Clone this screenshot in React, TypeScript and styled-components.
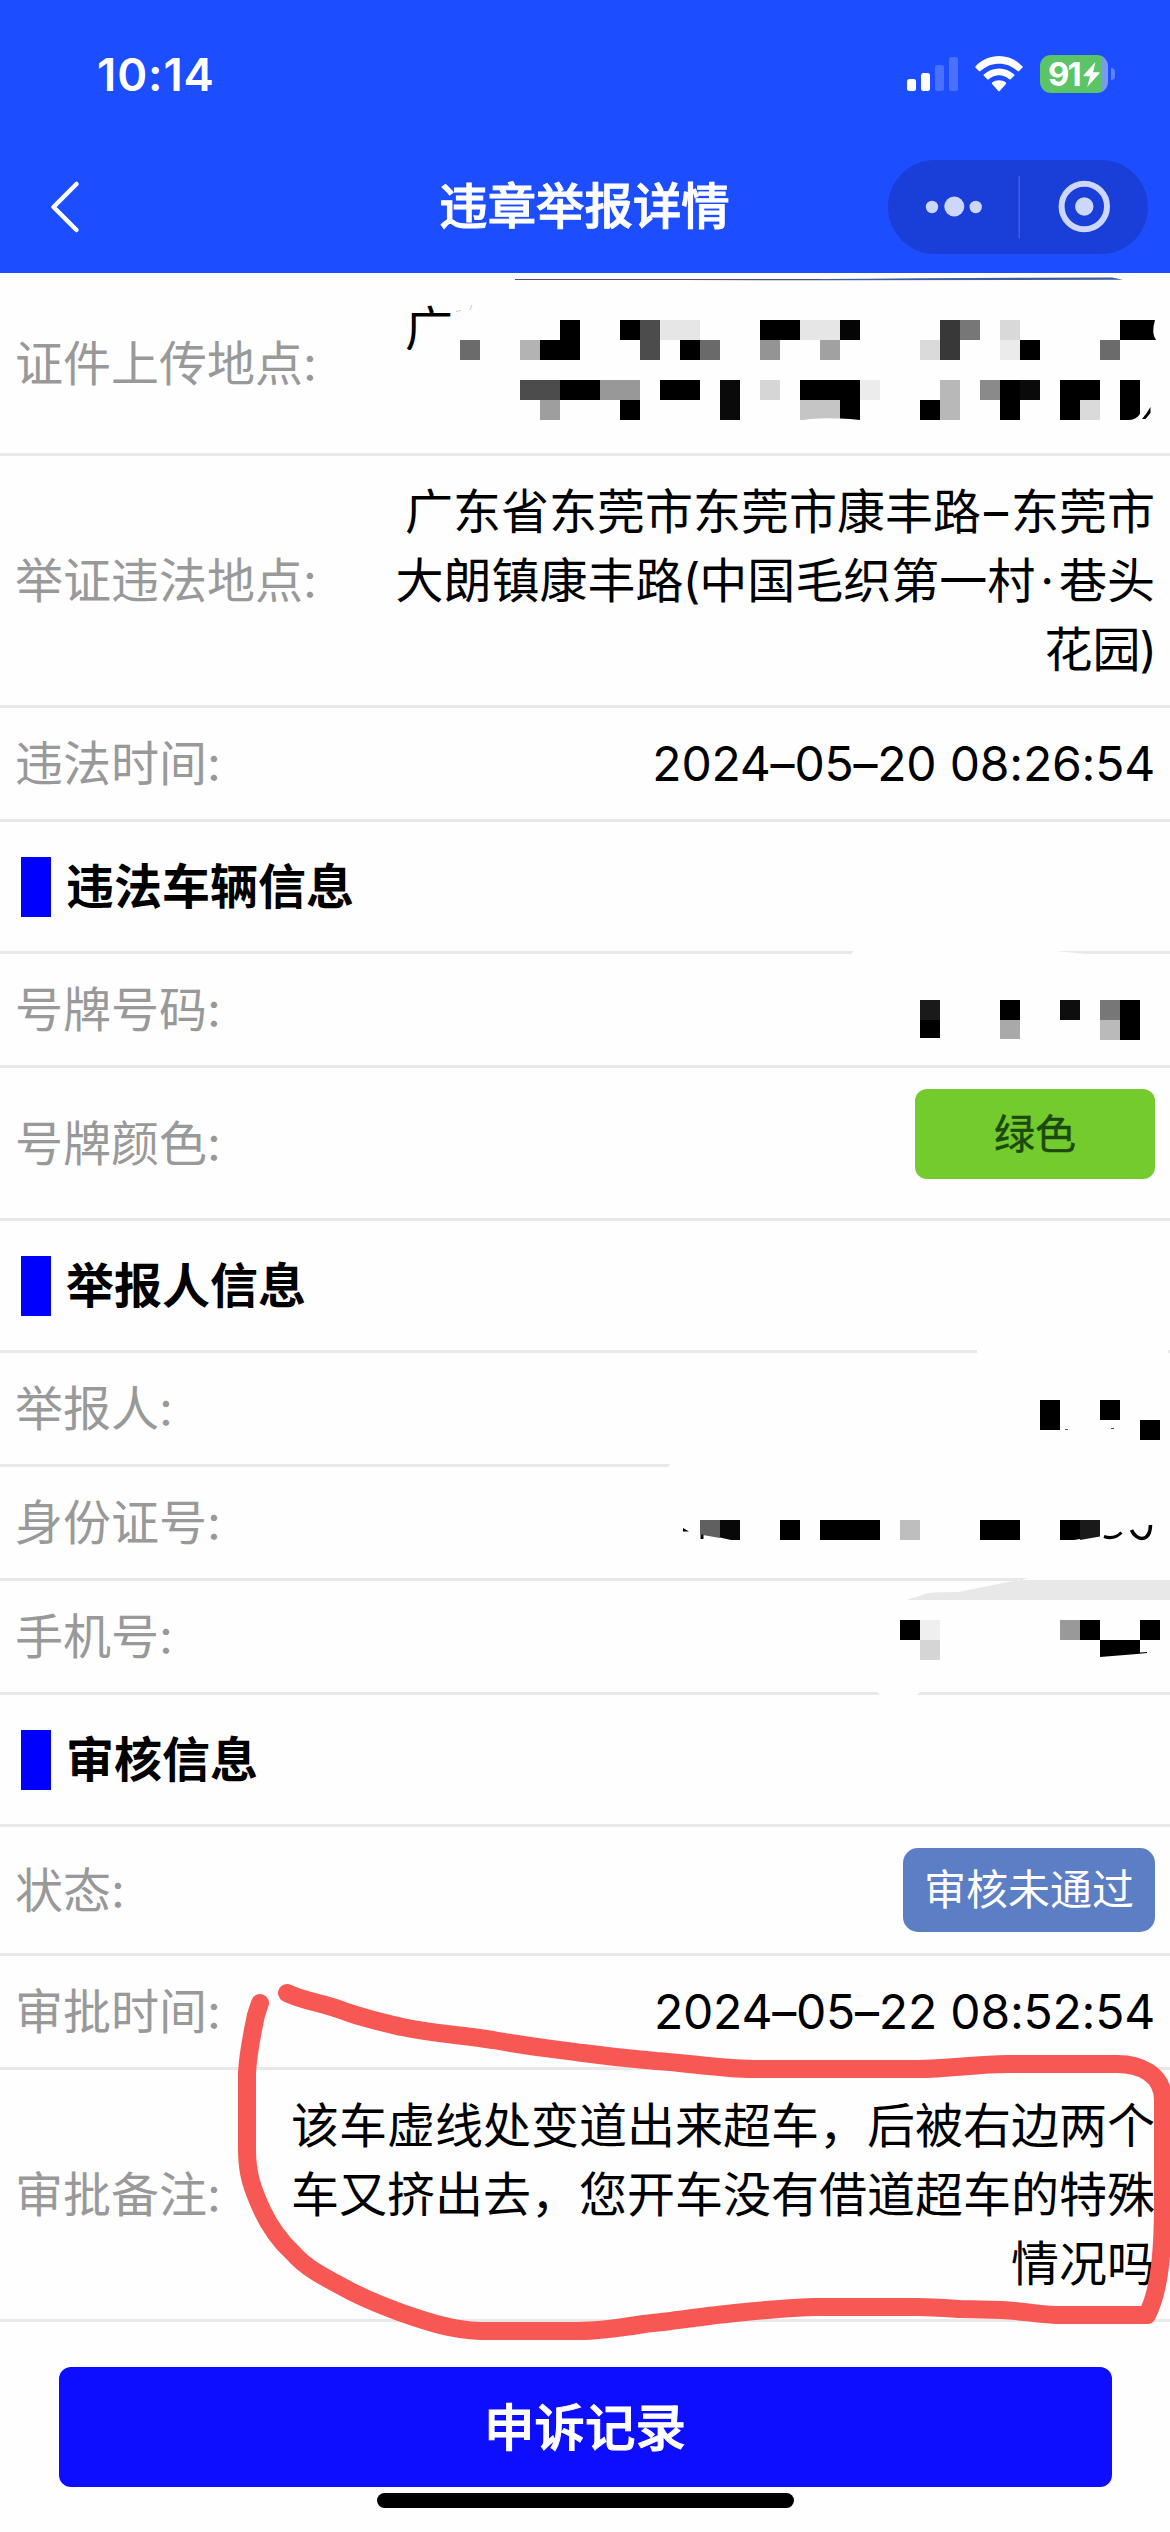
import React from "react";
import styled, { createGlobalStyle } from "styled-components";

const GlobalStyle = createGlobalStyle`
  * { box-sizing: border-box; }
  body { margin: 0; background: #fefefe; }
`;

const Page = styled.div`
  position: relative;
  width: 1170px;
  height: 2532px;
  overflow: hidden;
  display: flex;
  flex-direction: column;
  background: #fefefe;
  color: #000;
  font-family: Inter, "Noto Sans CJK SC", sans-serif;
  font-size: 48px;
  line-height: 69px;
`;

const Header = styled.header`
  flex: none;
  height: 273px;
  background: #1c4dff;
  color: #fff;
  display: flex;
  flex-direction: column;
`;

const StatusBar = styled.div`
  height: 140px;
  padding: 8px 55px 0 97px;
  display: flex;
  align-items: center;
  justify-content: space-between;
`;

const Clock = styled.span`
  font-size: 45.5px;
  font-weight: 600;
  letter-spacing: 0.9px;
`;

const StatusIcons = styled.div`
  display: flex;
  align-items: center;
  gap: 17px;
`;

const Battery = styled.div`
  display: flex;
  align-items: center;
  gap: 3px;
`;

const BatteryBody = styled.div`
  width: 68px;
  height: 38px;
  border-radius: 11px;
  padding-left: 8px;
  display: flex;
  align-items: center;
  gap: 1px;
  background: linear-gradient(90deg, #5ac466 0 62px, #7a9ce8 62px);
`;

const BatteryLevel = styled.span`
  width: 34px;
  font-size: 33px;
  font-weight: 700;
  line-height: 38px;
  letter-spacing: -2px;
  white-space: nowrap;
`;

const BatteryNub = styled.div`
  width: 4px;
  height: 12px;
  border-radius: 0 4px 4px 0;
  background: #5f82fb;
`;

const NavBar = styled.div`
  height: 133px;
  padding: 0 22px 0 49px;
  display: grid;
  grid-template-columns: 260px 1fr 260px;
  align-items: center;
`;

const Title = styled.h1`
  margin: 0;
  font-size: 48.4px;
  font-weight: 500;
  -webkit-text-stroke: 1px currentColor;
  text-align: center;
  padding-right: 28px;
  white-space: nowrap;
`;

const Capsule = styled.div`
  height: 94px;
  border-radius: 47px;
  background: #1a3fd9;
`;

const Row = styled.div`
  position: relative;
  flex: none;
  display: flex;
  align-items: center;
  justify-content: space-between;
  padding: 21px 15px;
  border-bottom: 3px solid #e8e8e8;
`;

const Label = styled.span`
  color: #999;
  white-space: nowrap;
`;

const Value = styled.div`
  text-align: right;
  white-space: nowrap;
`;

const Digits = styled(Value)`
  letter-spacing: -0.2px;
`;

const Mark = styled.span<{ $before?: number; $after?: number }>`
  margin-left: ${(p) => p.$before ?? 0}px;
  margin-right: ${(p) => p.$after ?? 0}px;
`;

const MaskedAddress = styled.div`
  width: 750px;
  height: 138px;
`;

const FirstGlyph = styled.span`
  display: inline-block;
  clip-path: polygon(0 0, 46px 0, 46px 24px, 20px 24px, 20px 56px, 0 56px);
`;

const SectionHead = styled.div`
  position: relative;
  flex: none;
  height: 132px;
  display: flex;
  align-items: center;
  gap: 15px;
  padding-left: 21px;
  border-bottom: 3px solid #e8e8e8;
`;

const Marker = styled.i`
  width: 30px;
  height: 60px;
  background: #0000ff;
`;

const SectionTitle = styled.h2`
  margin: 0;
  font-size: 48px;
  font-weight: 700;
`;

const PlateColor = styled.div`
  width: 240px;
  height: 90px;
  margin-bottom: 18px;
  border-radius: 12px;
  background: #73cb2e;
  color: #1d4a0c;
  font-size: 41px;
  line-height: 90px;
  text-align: center;
  -webkit-text-stroke: 0.5px currentColor;
`;

const Tag = styled.div`
  height: 84px;
  padding: 0 21px;
  border-radius: 15px;
  background: #5c7ec4;
  color: #fff;
  font-size: 42px;
  line-height: 84px;
`;

const Footer = styled.footer`
  display: flex;
  flex-direction: column;
  align-items: center;
  gap: 6px;
  padding-top: 45px;
`;

const RecordButton = styled.button`
  width: 1053px;
  height: 120px;
  border: 0;
  border-radius: 12px;
  background: #0d0dff;
  color: #fff;
  font: 500 50.5px/120px Inter, "Noto Sans CJK SC", sans-serif;
  -webkit-text-stroke: 1px currentColor;
`;

const HomeIndicator = styled.div`
  width: 417px;
  height: 15px;
  border-radius: 8px;
  background: #000;
`;

const Overlay = styled.svg`
  position: absolute;
  left: 0;
  top: 0;
  pointer-events: none;
`;

type Cell = [x: number, y: number, w: number, h: number, fill: string];

function Mosaic({ top, height, cells, children }: {
  top: number; height: number; cells: Cell[]; children?: React.ReactNode;
}) {
  return (
    <Overlay width={1170} height={height} viewBox={`0 ${top} 1170 ${height}`}>
      {children}
      {cells.map(([x, y, w, h, fill], i) => (
        <rect key={i} x={x} y={y} width={w} height={h} fill={fill} shapeRendering="crispEdges" />
      ))}
    </Overlay>
  );
}

const K = "#000";

const addressCells: Cell[] = [
  [560, 320, 20, 20, K], [620, 320, 20, 20, K], [640, 320, 20, 40, "#4c4c4c"], [660, 320, 40, 20, "#e6e6e6"],
  [760, 320, 40, 20, K], [800, 320, 40, 20, "#e6e6e6"], [840, 320, 20, 20, "#050505"],
  [940, 320, 20, 40, "#383838"], [960, 320, 20, 20, "#777"], [1000, 320, 20, 20, "#d9d9d9"],
  [460, 340, 20, 20, "#6b6b6b"], [520, 340, 20, 20, "#b3b3b3"], [540, 340, 40, 20, K],
  [680, 340, 20, 20, K], [700, 340, 20, 20, "#6a6a6a"], [760, 340, 20, 20, "#949494"],
  [820, 340, 20, 20, "#a1a1a1"], [920, 340, 20, 20, "#dadada"], [1000, 340, 20, 20, "#ebebeb"],
  [1020, 340, 20, 20, K], [1100, 340, 20, 20, "#6b6b6b"],
  [520, 380, 40, 20, "#4c4c4c"], [560, 380, 40, 20, K], [600, 380, 40, 20, "#989898"],
  [660, 380, 40, 20, K], [720, 380, 20, 40, "#0a0a0a"], [760, 380, 20, 20, "#d6d6d6"],
  [800, 380, 60, 20, K], [860, 380, 20, 20, "#ececec"], [940, 380, 20, 40, "#b8b8b8"],
  [980, 380, 20, 20, "#8a8a8a"], [1000, 380, 20, 40, K], [1020, 380, 20, 20, "#0a0a0a"],
  [1060, 380, 40, 20, K], [540, 400, 20, 20, "#9e9e9e"], [620, 400, 20, 20, K],
  [920, 400, 20, 20, K], [1060, 400, 20, 20, K], [1080, 400, 20, 20, "#dadada"],
];

const plateCells: Cell[] = [
  [920, 1000, 20, 20, "#1a1a1a"], [920, 1020, 20, 18, K], [1000, 1000, 20, 20, K],
  [1000, 1020, 20, 19, "#a9a9a9"], [1060, 1000, 20, 20, "#0e0e0e"],
  [1100, 1000, 20, 20, "#777"], [1100, 1020, 20, 20, "#bababa"], [1120, 1000, 20, 40, K],
];

const reporterCells: Cell[] = [
  [1040, 1400, 20, 30, K], [1100, 1400, 20, 20, K], [1140, 1420, 20, 20, K],
  [1065, 1429, 3, 1, "#555"], [1111, 1428, 3, 1, "#555"],
];

const idCells: Cell[] = [
  [780, 1520, 20, 20, K], [820, 1520, 60, 20, K], [900, 1520, 20, 20, "#bebebe"], [980, 1520, 40, 20, K],
];

const phoneCells: Cell[] = [
  [900, 1620, 20, 20, K], [920, 1620, 20, 20, "#efefef"], [920, 1640, 20, 20, "#d5d5d5"],
  [1060, 1620, 20, 20, "#999"], [1080, 1620, 20, 20, K], [1140, 1620, 20, 20, K],
];

function Section({ title, children }: { title: string; children?: React.ReactNode }) {
  return (
    <SectionHead>
      <Marker />
      <SectionTitle>{title}</SectionTitle>
      {children}
    </SectionHead>
  );
}

export default function App() {
  return (
    <Page lang="zh-CN">
      <GlobalStyle />
      <Header>
        <StatusBar>
          <Clock>10:14</Clock>
          <StatusIcons>
            <svg width="51" height="34" viewBox="0 0 51 34" fill="#fff">
              <rect x="0" y="22" width="9" height="12" rx="2.5" />
              <rect x="14" y="16" width="9" height="18" rx="2.5" />
              <rect x="28" y="8" width="9" height="26" rx="2.5" opacity=".2" />
              <rect x="42" y="0" width="9" height="34" rx="2.5" opacity=".2" />
            </svg>
            <svg width="48" height="36" viewBox="0 0 48 36" fill="#fff">
              <path d="M.6 10.2C13.500-3.400 34.500-3.400 47.400 10.200Q48 11 47.400 11.700L44 15.100Q43.300 15.700 42.600 15.100C32.200 5.200 15.800 5.200 5.400 15.100Q4.700 15.700 4 15.100L.6 11.700Q0 11 .6 10.200Z" />
              <path d="M8.800 18.400C17.300 10.400 30.700 10.400 39.200 18.400Q39.900 19.100 39.200 19.800L35.700 23.200Q35 23.800 34.300 23.200C28.300 18 19.700 18 13.700 23.200Q13 23.800 12.300 23.200L8.800 19.800Q8.100 19.100 8.800 18.400Z" />
              <path d="M17.100 26.600C21 23.500 27 23.500 30.900 26.600Q31.600 27.300 30.900 28L24.700 35.100Q24 35.800 23.300 35.100L17.100 28Q16.400 27.300 17.100 26.600Z" />
            </svg>
            <Battery>
              <BatteryBody>
                <BatteryLevel>91</BatteryLevel>
                <svg width="17" height="25" viewBox="0 0 17 25" fill="#fff">
                  <path d="M12.500 0 0.500 13.200Q0 14.300 1.200 14.300H7L4.200 25 16.500 11.300Q17 10.200 15.800 10.200H10Z" />
                </svg>
              </BatteryBody>
              <BatteryNub />
            </Battery>
          </StatusIcons>
        </StatusBar>
        <NavBar>
          <svg width="32" height="54" viewBox="0 0 32 54" fill="none" stroke="#fff" strokeWidth="4.500">
            <path d="M27.500 4 4.500 27 27.500 50" strokeLinecap="round" strokeLinejoin="round" />
          </svg>
          <Title>违章举报详情</Title>
          <Capsule>
            <svg width="260" height="94" viewBox="0 0 260 94" fill="#ccd7fb">
              <circle cx="44" cy="47" r="6.200" />
              <circle cx="66.300" cy="46.500" r="10" />
              <circle cx="87.700" cy="47" r="6.200" />
              <rect x="130.500" y="16" width="1.500" height="62" fill="#3c5fe6" />
              <circle cx="196.300" cy="46.500" r="22.700" fill="none" stroke="#ccd7fb" strokeWidth="6" />
              <circle cx="196.300" cy="46.500" r="9.200" />
            </svg>
          </Capsule>
        </NavBar>
      </Header>

      <Row>
        <Label>证件上传地点:</Label>
        <MaskedAddress>
          <FirstGlyph>广</FirstGlyph>
        </MaskedAddress>
        <Mosaic top={273} height={183} cells={addressCells}>
          <path d="M515 279.600L820 279Q960 277.500 1112 277.500L1123 279.800L830 280.300Z" fill="#3f5c9c" />
          <path d="M515 279.500H820" stroke="#5d4a70" strokeWidth="1" />
          <path d="M1120 320H1155Q1151 333 1156 340H1120Z" />
          <path d="M800 400H840V418.500Q815 417.500 804 420H800Z" fill="#c5c5c5" />
          <path d="M840 400H860V420Q850 418.800 840 418.500Z" />
          <path d="M1120 380H1140V414Q1136 420 1128 420H1120Z" />
          <path d="M1150.500 407V413L1145.500 419H1142Q1147 413 1150.500 407Z" />
          <path d="M456 311.500L461 310.500M470 310L472 305" stroke="#bbb" strokeWidth=".8" />
        </Mosaic>
      </Row>
      <Row>
        <Label>举证违法地点:</Label>
        <Value>
          广东省东莞市东莞市康丰路<Mark $before={3} $after={3}>–</Mark>东莞市
          <br />
          大朗镇康丰路<Mark $before={-1} $after={-1}>(</Mark>中国毛织第一村<Mark $before={5} $after={5}>·</Mark>巷头
          <br />
          花园<Mark $before={-1} $after={-2}>)</Mark>
        </Value>
      </Row>
      <Row>
        <Label>违法时间:</Label>
        <Digits>2024–05–20 08:26:54</Digits>
      </Row>

      <Section title="违法车辆信息">
        <Mosaic top={822} height={132} cells={[]}>
          <path d="M854 950H1043L1087 954V955H851Z" fill="#fefefe" />
        </Mosaic>
      </Section>
      <Row>
        <Label>号牌号码:</Label>
        <Mosaic top={954} height={114} cells={plateCells} />
      </Row>
      <Row>
        <Label>号牌颜色:</Label>
        <PlateColor>绿色</PlateColor>
      </Row>

      <Section title="举报人信息">
        <Mosaic top={1221} height={132} cells={[[977, 1350, 191, 3, "#fefefe"]]} />
      </Section>
      <Row>
        <Label>举报人:</Label>
        <Mosaic top={1353} height={114} cells={reporterCells}>
          <path d="M671 1463H1170V1467H668Z" fill="#fefefe" />
        </Mosaic>
      </Row>
      <Row>
        <Label>身份证号:</Label>
        <Mosaic top={1467} height={114} cells={idCells}>
          <path d="M1032 1577H1170V1580H1018V1581Z" fill="#fefefe" />
          <path d="M683 1528L689 1531.500H683Z" />
          <path d="M700 1520H720V1538L700 1534.500Z" fill="#606060" />
          <path d="M720 1520H740V1540H731L720 1537.500ZM700.500 1534.500H703.500V1539H700.500Z" fill="#080808" />
          <path d="M1060 1520H1080V1539L1074 1540H1060Z" />
          <path d="M1080 1520H1100V1536.500L1080 1540Z" fill="#1a1a1a" />
          <path d="M1104 1536.500Q1114 1540 1121.500 1532.500" fill="none" stroke="#000" strokeWidth="3" />
          <path d="M1131.500 1530C1136 1541 1150 1543 1150.500 1525" fill="none" stroke="#000" strokeWidth="3.500" />
        </Mosaic>
      </Row>
      <Row>
        <Label>手机号:</Label>
        <Mosaic top={1581} height={114} cells={phoneCells}>
          <path d="M1018 1580H1170V1600H907L928 1593Q940 1592 958 1592Z" fill="#e8e8e8" />
          <path d="M1100 1640H1140V1652.500L1147 1652V1653L1137 1654L1100 1657Z" />
          <path d="M876 1691H921L917 1695H880Z" fill="#fefefe" />
        </Mosaic>
      </Row>

      <Section title="审核信息" />
      <Row>
        <Label>状态:</Label>
        <Tag>审核未通过</Tag>
      </Row>
      <Row>
        <Label>审批时间:</Label>
        <Digits>2024–05–22 08:52:54</Digits>
      </Row>
      <Row>
        <Label>审批备注:</Label>
        <Value>
          该车虚线处变道出来超车，后被右边两个
          <br />
          车又挤出去，您开车没有借道超车的特殊
          <br />
          情况吗
        </Value>
      </Row>

      <Footer>
        <RecordButton>申诉记录</RecordButton>
        <HomeIndicator />
      </Footer>

      <Overlay width={1170} height={2532} viewBox="0 0 1170 2532">
        <path
          d="M287 1993C300 2000 322 2003 341 2010C362 2018 380 2022 402 2027C435 2034 462 2035 493 2040C525 2046 553 2049 583 2053C612 2057 632 2059 656 2061C690 2063 720 2069 753 2069L917 2069C950 2069 975 2064 1008 2064L1117 2064C1140 2064 1163 2074 1163 2100V2200C1163 2250 1160 2290 1147 2315L1056 2315C1035 2314 1022 2311 1002 2310L960 2309C945 2308 932 2307 917 2307L814 2307C785 2308 763 2310 735 2313C704 2316 675 2321 644 2324C620 2328 600 2331 577 2331L480 2331C452 2330 428 2322 402 2313C380 2305 360 2297 341 2286C322 2276 305 2267 293 2253C279 2240 270 2227 262 2210C253 2190 247 2175 247 2150V2073C248 2052 252 2035 256 2015L260 2003"
          fill="none"
          stroke="#f85854"
          strokeWidth="18"
          strokeLinecap="round"
          strokeLinejoin="round"
        />
      </Overlay>
    </Page>
  );
}
